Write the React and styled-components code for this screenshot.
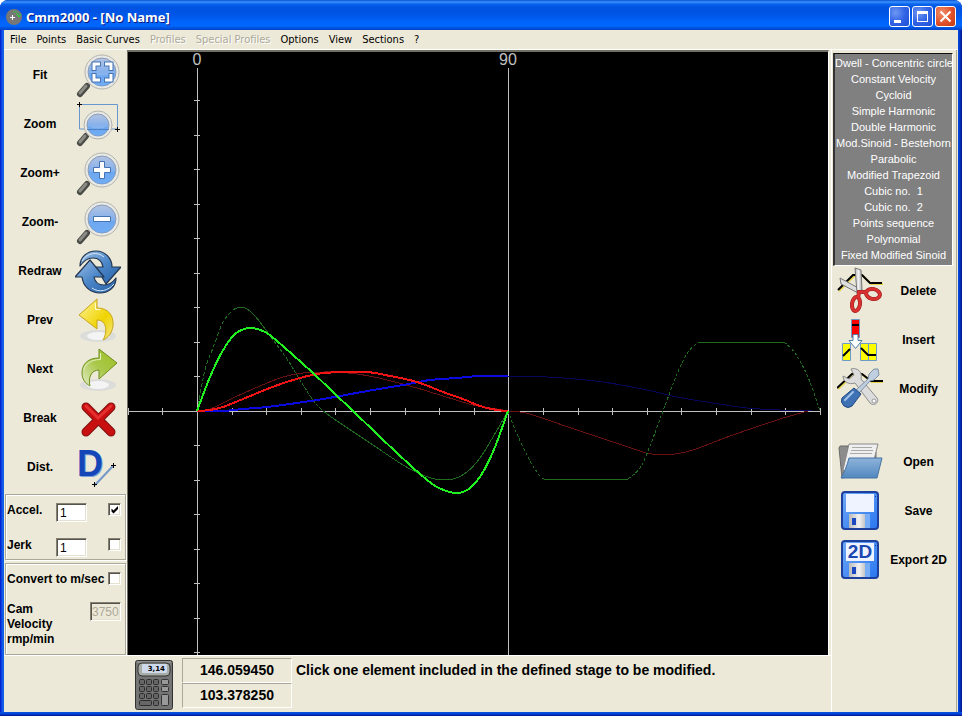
import React, { useState } from 'react';
import styled, { createGlobalStyle, css } from 'styled-components';

const FACE = '#ece9d8';
const SHADE = '#aca899';
const SANS = '"Liberation Sans", Arial, sans-serif';

const Global = createGlobalStyle`
  *, *::before, *::after { box-sizing: border-box; }
  body { margin: 0; background: #fff; font-family: ${SANS}; color: #000; }
  button, input { font-family: inherit; margin: 0; }
`;

const Window = styled.div`
  display: flex;
  flex-direction: column;
  min-height: 100vh;
  background: linear-gradient(90deg, #0019cf 0, #0831d9 1px, #166aee 3px, #0855dd 4px, #0855dd calc(100% - 5px), #0441d8 calc(100% - 3px), #00138c 100%);
  border-radius: 8px 8px 0 0;
  overflow: hidden;
`;

const TitleBar = styled.header`
  display: flex;
  align-items: center;
  gap: 4px;
  height: 30px;
  padding: 3px 6px 0 6px;
  background: linear-gradient(180deg, #0a50d0 0, #3a93ff 2px, #0a66ee 4px, #0053e1 7px, #0055e5 14px, #0064fb 22px, #0067ff 26px, #0052dd 28px, #0043c8 30px);
`;

const Title = styled.h1`
  flex: 1;
  margin: 0;
  font: bold 13px/20px "Noto Sans", "Open Sans", sans-serif;
  color: #fff;
  text-shadow: 1px 1px 0 #0a1883;
`;

const Captions = styled.div`
  display: flex;
  gap: 2px;
`;

const CaptionButton = styled.button`
  width: 21px;
  height: 21px;
  padding: 0;
  border: 1px solid #fff;
  border-radius: 3px;
  background: ${p => p.$close
    ? 'radial-gradient(circle at 30% 30%, #f0906c, #e0512a 55%, #c03a12)'
    : 'radial-gradient(circle at 30% 30%, #6f98f2, #3264e6 50%, #1c4fd6)'};
  svg { display: block; }
`;

const MenuBar = styled.nav`
  display: flex;
  gap: 10px;
  height: 20px;
  margin: 0 4px;
  padding: 0 6px;
  background: ${FACE};
  border-bottom: 1px solid #fff;
`;

const MenuItem = styled.button`
  padding: 0;
  border: 0;
  background: none;
  font: 11px/18px "DejaVu Sans Condensed", "DejaVu Sans", sans-serif;
  white-space: nowrap;
  color: #000;
  &:disabled { color: ${SHADE}; text-shadow: 1px 1px 0 #fff; }
`;

const Body = styled.main`
  flex: 1;
  display: grid;
  grid-template-columns: minmax(0, 1fr) 127px;
  margin: 0 4px;
  background: ${FACE};
`;

const Work = styled.div`
  display: grid;
  grid-template-columns: 123px minmax(0, 1fr);
  grid-template-rows: minmax(0, 1fr) 57px;
`;

const LeftPanel = styled.aside`
  display: flex;
  flex-direction: column;
  padding: 0 1px;
`;

const Tools = styled.div`
  display: flex;
  flex-direction: column;
  margin-bottom: ${p => (p.$gap ? '24px' : '3px')};
  margin-left: ${p => (p.$right ? '4px' : '0')};
`;

const Tool = styled.button`
  display: grid;
  grid-template-columns: ${p => (p.$right ? '46px 1fr' : '70px 46px')};
  align-items: center;
  height: 49px;
  padding: 0;
  border: 0;
  background: none;
  color: #000;
  font-size: 12px;
  font-weight: bold;
  text-align: center;
  white-space: nowrap;
  svg { display: block; width: 46px; height: 48px; }
`;

const Group = styled.section`
  display: flex;
  flex-direction: column;
  gap: 16px;
  border: 1px solid ${SHADE};
  box-shadow: inset 1px 1px 0 #fff, 1px 1px 0 #fff;
  font-size: 12px;
  font-weight: bold;
  ${p => p.$fill
    ? css`flex: 1; gap: 15px; margin-top: 3px; padding: 8px 4px 0 1px;`
    : css`height: 66px; padding: 8px 4px 0 1px;`}
`;

const Field = styled.div`
  display: grid;
  grid-template-columns: ${p => p.$cols || '49px 31px 1fr'};
  align-items: start;
  justify-items: start;
  line-height: 15px;
  white-space: nowrap;
`;

const sunken = css`
  border: 1px solid;
  border-color: #848073 #fff #fff #848073;
  box-shadow: inset 1px 1px 0 #55534a, inset -1px -1px 0 #e4e1d0;
`;

const Entry = styled.input`
  width: 31px;
  height: 19px;
  padding: 1px 0 0 3px;
  ${sunken}
  border-radius: 0;
  background: #fff;
  font-size: 12px;
  &:disabled { padding: 0 0 0 1px; background: ${FACE}; color: ${SHADE}; }
`;

const Tick = styled.input`
  appearance: none;
  justify-self: end;
  width: 13px;
  height: 13px;
  ${sunken}
  background: #fff;
  &:checked {
    background: #fff url("data:image/svg+xml,%3Csvg xmlns='http://www.w3.org/2000/svg' viewBox='0 0 11 11'%3E%3Cpath d='M2.5 4.5v3l2 2 4.500-4.500v-3l-4.500 4.500z'/%3E%3C/svg%3E") 0 0 / 11px 11px no-repeat;
  }
`;

const ChartFrame = styled.section`
  min-width: 0;
  border: solid #716f64;
  border-width: 2px 0 0 1px;
  border-right: 1px solid #fff;
  background: #000;
  margin-right: 2px;
  svg { display: block; width: 100%; height: 100%; }
`;

const Status = styled.footer`
  grid-column: 1 / -1;
  display: flex;
  gap: 8px;
  align-items: flex-start;
  padding: 3px 0 0 130px;
  border-top: 1px solid #fff;
  font-size: 14px;
  font-weight: bold;
`;

const CalcButton = styled.button`
  padding: 0;
  border: 0;
  background: none;
  svg { display: block; width: 40px; height: 52px; }
`;

const Readouts = styled.div`
  display: grid;
  margin-top: -1px;
  width: 110px;
`;

const Readout = styled.output`
  height: 25px;
  border: 1px solid;
  border-color: ${SHADE} #fff #fff ${SHADE};
  line-height: 23px;
  text-align: center;
`;

const Message = styled.p`
  flex: 1;
  margin: 0 0 0 -4px;
  line-height: 22px;
`;

const RightPanel = styled.aside`
  display: flex;
  flex-direction: column;
  margin: 0 1px 0 0;
  padding: 3px 2px 0 1px;
  border: solid;
  border-width: 0 1px;
  border-color: #fff ${SHADE} #fff #fff;
`;

const ProfileList = styled.ul`
  width: 120px;
  margin: 0;
  padding: 1px 0 2px;
  list-style: none;
  background: #808080;
  border: solid;
  border-width: 1px 1px 1px 2px;
  border-color: #111 #fff #fff #333;
`;

const ProfileButton = styled.button`
  display: block;
  width: 100%;
  height: 16px;
  padding: 0;
  border: 0;
  background: none;
  color: #fff;
  font-size: 11px;
  line-height: 16px;
  text-align: center;
  white-space: pre;
`;

const HiddenDefs = styled.svg`
  position: absolute;
  width: 0;
  height: 0;
`;

const BottomEdge = styled.div`
  height: 4px;
  background: linear-gradient(180deg, #0855dd, #0441d8 2px, #00138c);
`;

/* ---------- icons ---------- */

const Svg = ({ children }) => <svg viewBox="0 0 46 48" aria-hidden="true">{children}</svg>;

const Lens = ({ cx = 27, cy = 21, r = 17, children }) => (
  <g>
    <path d={`M${cx - r + 2} ${cy + r - 3}L5 43`} stroke="#4a4a46" strokeWidth="6" strokeLinecap="round" />
    <path d={`M${cx - r + 1} ${cy + r - 3}L5 42`} stroke="#8b8b84" strokeWidth="3" strokeLinecap="round" />
    <circle cx={cx} cy={cy} r={r} fill="#e9e9e6" stroke="#b3b3ad" />
    <circle cx={cx} cy={cy} r={r - 3} fill="url(#glass)" stroke="#8d9cb4" />
    <path d={`M${cx - r + 4} ${cy + 1}q${r - 4} 5 ${2 * r - 8} 0a${r - 4} ${r - 4} 0 0 1 ${8 - 2 * r} 0`} fill="#5b9ff0" opacity=".6" />
    {children}
  </g>
);

const Defs = () => (
  <HiddenDefs aria-hidden="true">
    <defs>
      <linearGradient id="glass" x1="0" y1="0" x2="0" y2="1">
        <stop offset="0" stopColor="#b4c4e2" /><stop offset=".5" stopColor="#86b1ec" /><stop offset="1" stopColor="#8fc4fb" />
      </linearGradient>
      <linearGradient id="arrowBlue" x1="0" y1="0" x2="1" y2="1">
        <stop offset="0" stopColor="#9dc0e6" /><stop offset=".5" stopColor="#4b86c8" /><stop offset="1" stopColor="#265fa6" />
      </linearGradient>
      <linearGradient id="yellow" x1="0" y1="0" x2="1" y2="1">
        <stop offset="0" stopColor="#fff3a0" /><stop offset=".6" stopColor="#efd400" /><stop offset="1" stopColor="#f5e68a" />
      </linearGradient>
      <linearGradient id="green" x1="1" y1="0" x2="0" y2="1">
        <stop offset="0" stopColor="#9dbf20" /><stop offset=".5" stopColor="#a9c84a" /><stop offset="1" stopColor="#e3ecc6" />
      </linearGradient>
      <linearGradient id="folder" x1="0" y1="0" x2="0" y2="1">
        <stop offset="0" stopColor="#8db3da" /><stop offset="1" stopColor="#5188bf" />
      </linearGradient>
      <linearGradient id="disk" x1="0" y1="0" x2="1" y2="1">
        <stop offset="0" stopColor="#6fa9f7" /><stop offset="1" stopColor="#2a76f0" />
      </linearGradient>
      <linearGradient id="steel" x1="0" y1="0" x2="1" y2="0">
        <stop offset="0" stopColor="#b9b9b9" /><stop offset=".5" stopColor="#f2f2f2" /><stop offset="1" stopColor="#a9a9a9" />
      </linearGradient>
    </defs>
  </HiddenDefs>
);

const FitIcon = () => (
  <Svg><Lens>
    <path d="M19 20v-7h7M29 13h7v7M36 22v7h-7M26 29h-7v-7" fill="none" stroke="#4273b4" strokeWidth="5" />
    <path d="M19 19v-6h6M30 13h6v6M36 23v6h-6M25 29h-6v-6" fill="none" stroke="#fff" strokeWidth="3" />
  </Lens></Svg>
);

const ZoomIcon = () => (
  <Svg>
    <path d="M4.500 4.500H42.500V29H4.500z" fill="none" stroke="#6797cf" />
    <Lens cx={23} cy={25} r={14}><path d="M12 29.500h22" stroke="#4d80c4" /></Lens>
    <path d="M2 4.500h5M4.500 2v5M40 29.500h5M42.500 27v5" stroke="#000" />
  </Svg>
);

const PlusIcon = () => (
  <Svg><Lens>
    <path d="M24.500 12.500h5v6h6v5h-6v6h-5v-6h-6v-5h6z" fill="#fff" stroke="#4273b4" />
  </Lens></Svg>
);

const MinusIcon = () => (
  <Svg><Lens><path d="M18.500 18.500h17v5h-17z" fill="#fff" stroke="#4273b4" /></Lens></Svg>
);

const RedrawIcon = () => (
  <Svg>
    <g stroke="#24364f" strokeWidth="1.200" strokeLinejoin="round">
      <path d="M5 19C5 10 12 4 21 4c9 0 16 7 16 16h9L31 37 21 20h7c-1-6-5-9-10-9-6 0-9 3-13 8z" fill="url(#arrowBlue)" />
      <path d="M41 31c0 9-7 15-16 15-10 0-17-7-18-16H0L15 13l14 17h-10c1 5 4 8 10 8 5 0 9-3 12-7z" fill="url(#arrowBlue)" />
    </g>
    <path d="M7 14c5-8 15-10 22-4M39 37c-6 7-15 9-22 4" fill="none" stroke="#d5e5f5" />
  </Svg>
);

const PrevIcon = () => (
  <Svg>
    <ellipse cx="23" cy="40" rx="18" ry="6" fill="#dcdcda" /><ellipse cx="23" cy="40" rx="11" ry="4" fill="#f4f4f4" />
    <path d="M22 3v9c11 0 17 7 16 18-1 7-5 12-10 14 4-6 5-20-6-20v9L4 19z" fill="url(#yellow)" stroke="#c8a41c" strokeLinejoin="round" />
    <path d="M20.500 7v6.500h5" fill="none" stroke="#fffbd6" />
  </Svg>
);

const NextIcon = () => (
  <Svg>
    <ellipse cx="23" cy="40" rx="18" ry="6" fill="#dcdcda" /><ellipse cx="23" cy="40" rx="11" ry="4" fill="#f4f4f4" />
    <path d="M24 4v9C13 13 7 19 7 28c0 6 3 10 8 13-2-8 1-16 9-16v9l18-16z" fill="url(#green)" stroke="#6f8f1e" strokeLinejoin="round" />
    <path d="M25.500 8v6.500c-9 0-15 4-17 11" fill="none" stroke="#e4efc0" />
  </Svg>
);

const BreakIcon = () => (
  <Svg>
    <path d="M11 13l25 25M36 13L11 38" stroke="#7d1010" strokeWidth="9" strokeLinecap="round" />
    <path d="M11 13l25 25M36 13L11 38" stroke="#c81010" strokeWidth="7" strokeLinecap="round" />
    <path d="M11 12l12 12L36 12" fill="none" stroke="#e63030" strokeWidth="3" strokeLinecap="round" />
  </Svg>
);

const DistIcon = () => (
  <Svg>
    <text x="3" y="34" fontSize="36" fontWeight="bold" fill="#7b9fd6">D</text>
    <text x="2" y="33" fontSize="36" fontWeight="bold" fill="#1546b8">D</text>
    <path d="M20 42l18-19" stroke="#7497c6" strokeWidth="2" />
    <path d="M17 41.500h5M19.500 39v5M36 22.500h5M38.500 20v5" stroke="#000" />
  </Svg>
);

const Trace = ({ d }) => (
  <g fill="none" strokeWidth="2">
    <path d={d} stroke="#e6d54a" transform="translate(1 1)" /><path d={d} stroke="#000" />
  </g>
);

const DeleteIcon = () => (
  <Svg>
    <Trace d="M1 23L16 8h9l8 8h12" />
    <path d="M3 11l1 6 17 9 4-3z" fill="#dedede" stroke="#777" />
    <path d="M18 1l6 2 1 20-5 3z" fill="url(#steel)" stroke="#777" />
    <g fill="none" stroke="#8e1c1c" strokeWidth="4"><ellipse cx="36" cy="27" rx="7" ry="5" transform="rotate(12 36 27)" /><ellipse cx="19" cy="37" rx="4" ry="7" transform="rotate(8 19 37)" /><path d="M21 31l1-6 8 0" /></g>
    <g fill="none" stroke="#db3030" strokeWidth="3"><ellipse cx="36" cy="27" rx="7" ry="5" transform="rotate(12 36 27)" /><ellipse cx="19" cy="37" rx="4" ry="7" transform="rotate(8 19 37)" /><path d="M21 31l1-6 8 0" /></g>
  </Svg>
);

const InsertIcon = () => (
  <Svg>
    <g stroke="#6c9bc8">
      <path d="M14.500 3.500h8v18h-8z" fill="#f00" />
      <path d="M5.500 27.500h8v17h-8zM23.500 27.500h8v17h-8zM31.500 27.500h8v17h-8z" fill="#ff0" />
      <path d="M16 18.500h5v6h4l-6.500 8-6.500-8h4z" fill="#fff" stroke="#4f7ca6" />
    </g>
    <path d="M15 9h7M6 40l7-7M24 32l7 7h8" fill="none" stroke="#000" strokeWidth="2" />
  </Svg>
);

const ModifyIcon = () => (
  <Svg>
    <Trace d="M0 23L15 9h10l9 7h12" />
    <path d="M14 4c6-2 12 3 10 10l16 19c3 4-3 9-7 5L18 18C12 20 6 17 6 11l6 3 5-4z" fill="#dcdcdc" stroke="#8d8d8d" />
    <circle cx="37" cy="36" r="2" fill="#fff" stroke="#999" />
    <path d="M41 4l1 6-5 5-4 1-11 12-3-3 12-11 1-5 5-5z" fill="#bfcfe0" stroke="#8090a4" />
    <path d="M17 23l7 6-9 12q-4 3-8 0-4-4-2-8z" fill="#3f72b5" stroke="#1e477f" />
    <path d="M16 27L8 35" stroke="#a3c3ea" strokeWidth="2" strokeLinecap="round" />
  </Svg>
);

const OpenIcon = () => (
  <Svg>
    <path d="M2 10l1-2h8v6h28v20L5 40z" fill="#8c8c8c" stroke="#6b6b6b" />
    <path d="M12 6h29l-4 16-27 12-4-2z" fill="#efefef" stroke="#8a8a8a" />
    <path d="M15 9.500h20M14 12.500h22M13 15.500h22" stroke="#a9a9a9" />
    <path d="M12 20h33l-5 20H4c3-5 6-12 8-20z" fill="url(#folder)" stroke="#4773a2" />
  </Svg>
);

const DiskIcon = ({ label }) => (
  <Svg>
    <rect x="5" y="5" width="36" height="37" rx="3" fill="url(#disk)" stroke="#1d3f9e" strokeWidth="2" />
    <path d="M9 7h28v18H9z" fill="#eef3ff" />
    <path d="M38.500 9v1" stroke="#153a96" />
    <path d="M12 27h20v14H12z" fill="url(#steel)" /><path d="M28 27h5v14h-5z" fill="#77aef5" />
    <path d="M15 31h4v7h-4z" fill="#1d49c0" />
    {label && <text x="23" y="22" textAnchor="middle" fontSize="19" fontWeight="bold" fill="#1a47b0">{label}</text>}
  </Svg>
);

const Calculator = () => (
  <svg viewBox="0 0 40 52" aria-hidden="true">
    <rect x="1.500" y="1.500" width="37" height="49" rx="2" fill="#747474" stroke="#333" />
    <path d="M3 3h34" stroke="#aaa" />
    <rect x="4" y="4" width="32" height="13" rx="4" fill="#a8aea7" stroke="#333" />
    <rect x="8" y="5" width="25" height="9" rx="1" fill="#cdd9ea" />
    <text x="31" y="12" textAnchor="end" fontSize="7" fontWeight="bold" fontFamily="DejaVu Sans">3,14</text>
    <g fill="#666" stroke="#2c2c2c">
      {[20, 27, 34].map(y => [5, 12, 19].map(x => <rect key={`${x}-${y}`} x={x + 0.5} y={y + 0.5} width="5" height="5" rx="1" />))}
      <rect x="5.500" y="41.500" width="12" height="5" rx="1" /><rect x="19.500" y="41.500" width="5" height="5" rx="1" />
    </g>
    <g fill="#999" stroke="#333">
      <rect x="27.500" y="20.500" width="7" height="5" rx="1" /><rect x="27.500" y="27.500" width="7" height="5" rx="1" /><rect x="27.500" y="35.500" width="7" height="11" rx="1" />
    </g>
  </svg>
);

const AppIcon = () => (
  <svg width="16" height="16" viewBox="0 0 16 16" aria-hidden="true">
    <circle cx="8" cy="8" r="8" fill="#777" />
    <path d="M4 8.500h5M6.500 6v5" stroke="#fff" />
    <path d="M7 3c4-1 6 2 6 5M10 5l3 3 2-3" fill="none" stroke="#2bd13b" />
  </svg>
);

/* ---------- chart ---------- */

const smooth = pts => pts.reduce((d, p, i) => {
  if (i === 0) return `M${p[0]} ${p[1]}`;
  const a = pts[i - 2] || pts[i - 1];
  const b = pts[i - 1];
  const n = pts[i + 1] || p;
  return `${d}C${b[0] + (p[0] - a[0]) / 6} ${b[1] + (p[1] - a[1]) / 6} ${p[0] - (n[0] - b[0]) / 6} ${p[1] - (n[1] - b[1]) / 6} ${p[0]} ${p[1]}`;
}, '');

const CURVES = [
  { color: '#06065c', width: 1, pts: [[508, 376], [547, 377], [563, 378], [603, 382], [647, 390], [677, 397], [713, 403], [747, 408], [780, 410], [812, 411]] },
  { color: '#6b1111', width: 1, pts: [[508, 411], [520, 412], [533, 415], [577, 430], [637, 450], [652, 454], [675, 454], [693, 450], [733, 435], [777, 420], [808, 411]] },
  { color: '#6b1111', width: 1, pts: [[197, 411], [210, 409], [233, 398], [260, 386], [283, 377], [303, 373], [333, 372], [357, 374], [383, 379], [417, 388], [443, 396], [473, 405], [497, 409], [508, 411]] },
  { color: '#1f6b1f', width: 1, dash: '4 2', pts: [[197, 411], [205, 370], [213, 348], [223, 322], [233, 310]] },
  { color: '#1f6b1f', width: 1, pts: [[233, 310], [237, 308], [245, 308], [255, 316], [268, 333]] },
  { color: '#1f6b1f', width: 1, dash: '4 1', pts: [[268, 333], [287, 359], [300, 380], [313, 400], [323, 411]] },
  { color: '#1f6b1f', width: 1, pts: [[323, 411], [337, 421], [370, 443], [403, 465], [420, 474], [435, 479], [453, 479], [467, 472], [480, 458], [493, 437], [508, 411]] },
  { color: '#1f6b1f', width: 1, dash: '3 2', pts: [[508, 411], [517, 434], [530, 461], [540, 476], [544, 479]] },
  { color: '#1f6b1f', width: 1, pts: [[544, 479], [628, 479]] },
  { color: '#1f6b1f', width: 1, dash: '3 2', pts: [[628, 479], [640, 468], [650, 446], [663, 411], [677, 374], [688, 352], [699, 342]] },
  { color: '#1f6b1f', width: 1, pts: [[699, 342], [784, 342]] },
  { color: '#1f6b1f', width: 1, dash: '3 2', pts: [[784, 342], [795, 353], [808, 377], [820, 411]] },
  { color: '#0a0ae0', width: 2, pts: [[197, 411], [223, 411], [243, 409], [267, 407], [290, 404], [317, 400], [340, 396], [373, 390], [403, 385], [430, 380], [457, 378], [480, 376], [508, 376]] },
  { color: '#f01414', width: 2, pts: [[197, 411], [210, 410], [223, 407], [243, 399], [270, 388], [293, 380], [317, 374], [340, 372], [367, 372], [390, 376], [417, 382], [443, 392], [463, 399], [480, 406], [497, 410], [508, 411]] },
  { color: '#20f020', width: 2, pts: [[197, 411], [210, 377], [222, 352], [235, 334], [250, 328], [265, 332], [277, 341], [293, 355], [313, 373], [333, 392], [353, 411], [377, 434], [397, 453], [420, 474], [437, 487], [457, 493], [470, 488], [483, 472], [495, 447], [508, 411]] },
];

const STEP = 34.6;
const X_TICKS = Array.from({ length: 21 }, (_, i) => Math.round(197 + (i - 2) * STEP));
const Y_TICKS = Array.from({ length: 17 }, (_, i) => Math.floor(411 + (i - 9) * 34.5));

const Chart = () => (
  <svg viewBox="128 52 700 603" role="img" aria-label="Cam motion curves from 0 to 90 degrees">
    <g stroke="#c0c0c0" shapeRendering="crispEdges" fill="none">
      <path d="M128 411.500H820M197.500 68V655M508.500 68V655" />
      {X_TICKS.map(x => <path key={x} d={`M${x + 0.5} 408V415`} />)}
      {Y_TICKS.map(y => <path key={y} d={`M194 ${y + 0.5}H200`} />)}
    </g>
    <g fill="none" shapeRendering="crispEdges">
      {CURVES.map((c, i) => (
        <path key={i} d={smooth(c.pts)} stroke={c.color} strokeWidth={c.width} strokeDasharray={c.dash} />
      ))}
    </g>
    <g fill="#c0c0c0" fontSize="16" textAnchor="middle" fontFamily="Liberation Sans">
      <text x="197" y="65">0</text>
      <text x="508" y="65">90</text>
    </g>
  </svg>
);

/* ---------- page ---------- */

const MENUS = [['File'], ['Points'], ['Basic Curves'], ['Profiles', true], ['Special Profiles', true], ['Options'], ['View'], ['Sections'], ['?']];

const VIEW_TOOLS = [
  ['Fit', FitIcon], ['Zoom', ZoomIcon], ['Zoom+', PlusIcon], ['Zoom-', MinusIcon], ['Redraw', RedrawIcon],
  ['Prev', PrevIcon], ['Next', NextIcon], ['Break', BreakIcon], ['Dist.', DistIcon],
];

const PROFILES = [
  'Dwell - Concentric circle', 'Constant Velocity', 'Cycloid', 'Simple Harmonic', 'Double Harmonic',
  'Mod.Sinoid - Bestehorn', 'Parabolic', 'Modified Trapezoid', 'Cubic no.  1', 'Cubic no.  2',
  'Points sequence', 'Polynomial', 'Fixed Modified Sinoid',
];

const EDIT_TOOLS = [['Delete', DeleteIcon], ['Insert', InsertIcon], ['Modify', ModifyIcon]];
const FILE_TOOLS = [['Open', OpenIcon], ['Save', DiskIcon], ['Export 2D', () => <DiskIcon label="2D" />]];

const SideTools = ({ items, gap }) => (
  <Tools $right $gap={gap}>
    {items.map(([name, Icon]) => <Tool key={name} $right><Icon /><span>{name}</span></Tool>)}
  </Tools>
);

export default function App() {
  const [accelOn, setAccelOn] = useState(true);
  const [jerkOn, setJerkOn] = useState(false);
  const [convert, setConvert] = useState(false);
  const [accel, setAccel] = useState('1');
  const [jerk, setJerk] = useState('1');

  return (
    <>
      <Global />
      <Defs />
      <Window>
        <TitleBar>
          <AppIcon />
          <Title>Cmm2000 - [No Name]</Title>
          <Captions>
            <CaptionButton aria-label="Minimize"><svg viewBox="0 0 19 19"><path d="M4 13h7v3H4z" fill="#fff" /></svg></CaptionButton>
            <CaptionButton aria-label="Maximize"><svg viewBox="0 0 19 19"><path d="M4 4h11v11H4zM5 7v7h9V7z" fill="#fff" fillRule="evenodd" /></svg></CaptionButton>
            <CaptionButton $close aria-label="Close"><svg viewBox="0 0 19 19"><path d="M4.500 4.500l10 10M14.500 4.500l-10 10" stroke="#fff" strokeWidth="2" /></svg></CaptionButton>
          </Captions>
        </TitleBar>
        <MenuBar>
          {MENUS.map(([name, off]) => <MenuItem key={name} disabled={off}>{name}</MenuItem>)}
        </MenuBar>
        <Body>
          <Work>
            <LeftPanel>
              <Tools>
                {VIEW_TOOLS.map(([name, Icon]) => <Tool key={name}><span>{name}</span><Icon /></Tool>)}
              </Tools>
              <Group>
                <Field>
                  <label htmlFor="accel">Accel.</label>
                  <Entry id="accel" value={accel} onChange={e => setAccel(e.target.value)} />
                  <Tick type="checkbox" aria-label="Show acceleration" checked={accelOn} onChange={e => setAccelOn(e.target.checked)} />
                </Field>
                <Field>
                  <label htmlFor="jerk">Jerk</label>
                  <Entry id="jerk" value={jerk} onChange={e => setJerk(e.target.value)} />
                  <Tick type="checkbox" aria-label="Show jerk" checked={jerkOn} onChange={e => setJerkOn(e.target.checked)} />
                </Field>
              </Group>
              <Group $fill>
                <Field $cols="1fr 13px">
                  <label htmlFor="convert">Convert to m/sec</label>
                  <Tick id="convert" type="checkbox" checked={convert} onChange={e => setConvert(e.target.checked)} />
                </Field>
                <Field $cols="1fr 31px">
                  <label htmlFor="velocity">Cam<br />Velocity<br />rmp/min</label>
                  <Entry id="velocity" value="3750" disabled readOnly />
                </Field>
              </Group>
            </LeftPanel>
            <ChartFrame><Chart /></ChartFrame>
            <Status>
              <CalcButton aria-label="Calculator"><Calculator /></CalcButton>
              <Readouts>
                <Readout>146.059450</Readout>
                <Readout>103.378250</Readout>
              </Readouts>
              <Message>Click one element included in the defined stage to be modified.</Message>
            </Status>
          </Work>
          <RightPanel>
            <ProfileList>
              {PROFILES.map(name => <li key={name}><ProfileButton>{name}</ProfileButton></li>)}
            </ProfileList>
            <SideTools items={EDIT_TOOLS} gap />
            <SideTools items={FILE_TOOLS} />
          </RightPanel>
        </Body>
        <BottomEdge />
      </Window>
    </>
  );
}
